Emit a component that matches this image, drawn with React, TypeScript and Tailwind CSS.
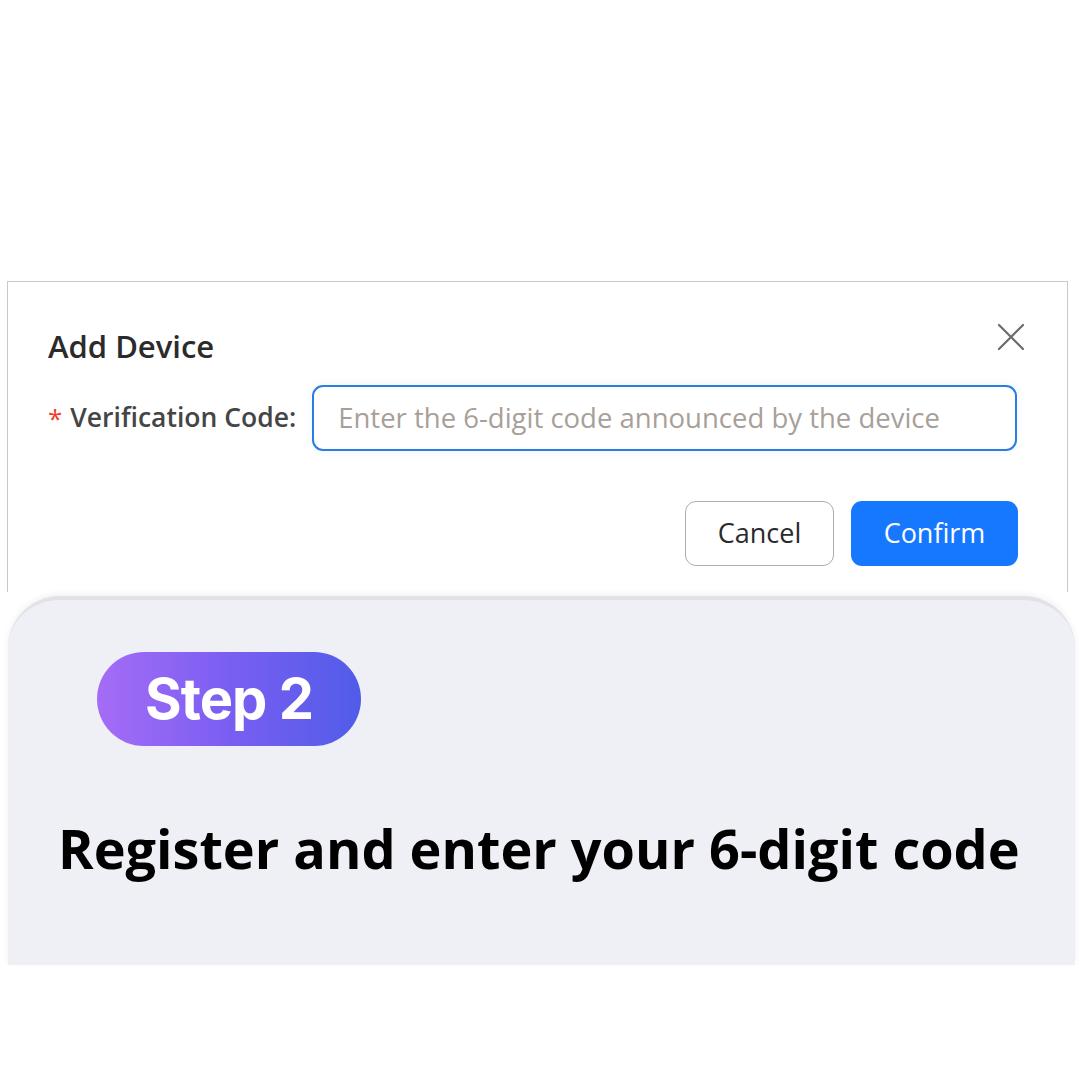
export default function App() {
  return (
    <div className="relative h-[1080px] w-[1080px] overflow-hidden bg-white" style={{ fontFamily: '"Open Sans", "Noto Sans", sans-serif' }}>
      <div className="h-[281px]" />

      {/* Dialog */}
      <div className="ml-[7px] h-[311px] w-[1061px] border-x border-t border-[#c9c9c9] bg-white px-[40px] pt-[36px]">
        <div className="flex items-start justify-between">
          <h2 className="mt-[8px] text-[31px] font-semibold leading-[40px] text-[#2b2b2b]">Add Device</h2>
          <button className="mr-[2px] mt-[5px] text-[#6b6b6b]">
            <svg width="28" height="28" viewBox="0 0 28 28" fill="none" stroke="currentColor" strokeWidth="2.2" strokeLinecap="round">
              <path d="M2 2 L26 26 M26 2 L2 26" />
            </svg>
          </button>
        </div>
        <div className="mt-[19px] flex items-center">
          <span className="mr-[8px] text-[26px] text-[#f23c2c]">*</span>
          <span className="text-[26.5px] font-semibold text-[#454545]">Verification Code:</span>
          <div className="ml-[16px] flex h-[66px] w-[705px] items-center rounded-[11px] border-2 border-[#2a7de1] bg-white px-[24px] shadow-[0_0_10px_rgba(42,125,225,0.08)]">
            <span className="whitespace-nowrap text-[27.5px] text-[#a99f99]">Enter the 6-digit code announced by the device</span>
          </div>
        </div>
        <div className="mt-[50px] flex justify-end gap-[17px] pr-[9px]">
          <button className="h-[65px] w-[149px] rounded-[11px] border border-[#b7aaa5] bg-white text-[27px] text-[#2b2b2b]">Cancel</button>
          <button className="h-[65px] w-[167px] rounded-[11px] bg-[#1677ff] text-[27px] text-white">Confirm</button>
        </div>
      </div>

      {/* Step card */}
      <div className="ml-[8px] mt-[4px] h-[369px] w-[1067px] rounded-t-[52px] border-t-[4px] border-[#e2e2e6] bg-[#efeff6] shadow-[0_-2px_6px_rgba(0,0,0,0.06)]">
        <div className="pl-[89px] pt-[52px]">
          <div
            className="flex h-[94px] w-[264px] items-center justify-center rounded-full bg-gradient-to-r from-[#a56cf6] via-[#7a5ef2] to-[#4f5ce8]"
            style={{ fontFamily: 'Inter, "Noto Sans", sans-serif' }}
          >
            <span className="text-[56px] font-bold tracking-[-1px] text-white">Step 2</span>
          </div>
        </div>
        <div className="mt-[70px] pl-[50px]">
          <h1 className="whitespace-nowrap text-[54px] font-bold leading-[64px] text-black">Register and enter your 6-digit code</h1>
        </div>
      </div>
    </div>
  );
}
